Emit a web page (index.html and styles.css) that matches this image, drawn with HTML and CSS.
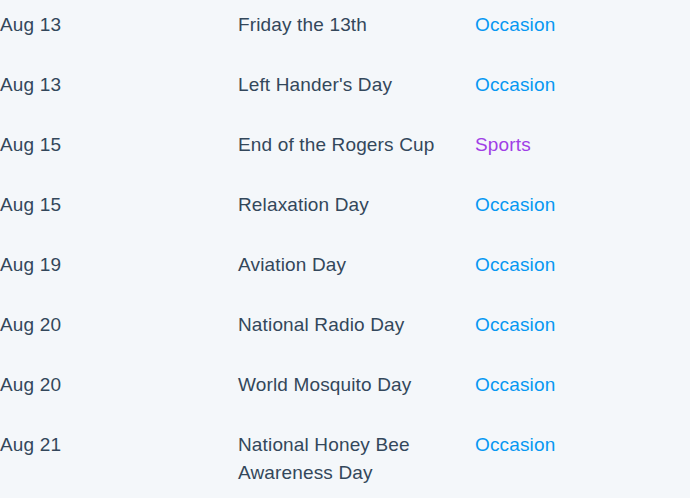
FILE: index.html
```html
<!DOCTYPE html>
<html>
<head>
<meta charset="utf-8">
<link rel="stylesheet" href="styles.css">
</head>
<body>
<div class="list">
  <div class="row"><div class="date">Aug 13</div><div class="name">Friday the 13th</div><div class="cat occasion">Occasion</div></div>
  <div class="row"><div class="date">Aug 13</div><div class="name">Left Hander's Day</div><div class="cat occasion">Occasion</div></div>
  <div class="row"><div class="date">Aug 15</div><div class="name">End of the Rogers Cup</div><div class="cat sports">Sports</div></div>
  <div class="row"><div class="date">Aug 15</div><div class="name">Relaxation Day</div><div class="cat occasion">Occasion</div></div>
  <div class="row"><div class="date">Aug 19</div><div class="name">Aviation Day</div><div class="cat occasion">Occasion</div></div>
  <div class="row"><div class="date">Aug 20</div><div class="name">National Radio Day</div><div class="cat occasion">Occasion</div></div>
  <div class="row"><div class="date">Aug 20</div><div class="name">World Mosquito Day</div><div class="cat occasion">Occasion</div></div>
  <div class="row"><div class="date">Aug 21</div><div class="name">National Honey Bee Awareness Day</div><div class="cat occasion">Occasion</div></div>
</div>
</body>
</html>
```
FILE: styles.css
```css
html, body {
  margin: 0;
  padding: 0;
  background: #f4f7fa;
}
body {
  font-family: "Liberation Sans", Arial, Helvetica, sans-serif;
  font-size: 19px;
  letter-spacing: 0.15px;
  line-height: 28px;
  color: #33475b;
}
.list {
  margin-top: -5px;
}
.row {
  display: grid;
  grid-template-columns: 238px 237px 1fr;
  padding: 16px 0;
}
.name {
  padding-right: 20px;
}
.occasion { color: #0798f2; }
.sports { color: #a03fe6; }
```
